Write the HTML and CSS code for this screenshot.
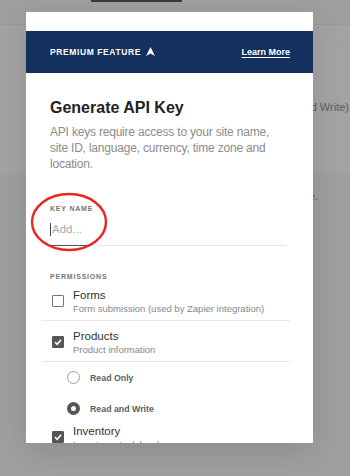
FILE: index.html
```html
<!DOCTYPE html>
<html>
<head>
    <title>Generate API Key</title>
    <meta name="viewport" content="width=device-width, initial-scale=1">
    <link rel="stylesheet" href="styles.css">
</head>
<body>
    <div class="page">
        <div class="page-tab"></div>
        <div class="page-panel">
            <p class="page-text">Read and Write)</p>
        </div>
        <p class="page-note">to your site.</p>
    </div>

    <div class="modal">
        <div class="modal-top"></div>
        <div class="banner">
            <span class="banner-label">
                PREMIUM FEATURE
                <svg class="banner-icon" width="9" height="9" viewBox="0 0 9 9">
                    <polygon points="4.5,0 9,9 4.5,6.6 0,9" fill="#fff"/>
                </svg>
            </span>
            <a class="banner-link" href="#">Learn More</a>
        </div>

        <div class="modal-body">
            <h1>Generate API Key</h1>
            <p class="intro">API keys require access to your site name, site ID, language, currency, time zone and location.</p>

            <div class="field">
                <label class="small-label">KEY NAME</label>
                <div class="field-input"><span class="caret"></span>Add...</div>
                <div class="field-line"></div>
                <svg class="highlight" width="78" height="60" viewBox="0 0 78 60">
                    <ellipse cx="39" cy="30" rx="37" ry="28" fill="none" stroke="#e8261c" stroke-width="2.4"/>
                </svg>
            </div>

            <div class="small-label perm-label">PERMISSIONS</div>

            <div class="perm-row">
                <span class="checkbox"></span>
                <div>
                    <div class="perm-title">Forms</div>
                    <div class="perm-sub">Form submission (used by Zapier integration)</div>
                </div>
            </div>

            <div class="perm-row">
                <span class="checkbox checked">
                    <svg width="10" height="10" viewBox="0 0 10 10"><polyline points="2,5.2 4.2,7.3 8,2.8" fill="none" stroke="#fff" stroke-width="1.6"/></svg>
                </span>
                <div>
                    <div class="perm-title">Products</div>
                    <div class="perm-sub">Product information</div>
                </div>
            </div>

            <div class="radio-row">
                <span class="radio"></span>
                <span class="radio-text">Read Only</span>
            </div>
            <div class="radio-row">
                <span class="radio selected"></span>
                <span class="radio-text">Read and Write</span>
            </div>

            <div class="perm-row last">
                <span class="checkbox checked">
                    <svg width="10" height="10" viewBox="0 0 10 10"><polyline points="2,5.2 4.2,7.3 8,2.8" fill="none" stroke="#fff" stroke-width="1.6"/></svg>
                </span>
                <div>
                    <div class="perm-title">Inventory</div>
                    <div class="perm-sub">Inventory stock levels</div>
                </div>
            </div>
        </div>
    </div>
</body>
</html>
```

FILE: styles.css
```css
* {
    margin: 0;
    padding: 0;
    box-sizing: border-box;
}

body {
    font-family: 'Liberation Sans', Arial, sans-serif;
    background: #9f9f9f;
    width: 350px;
    height: 476px;
    overflow: hidden;
}

/* page behind the overlay */
.page {
    height: 476px;
}

.page-tab {
    width: 91px;
    height: 2px;
    margin-left: 91px;
    background: #3a3a3a;
}

.page-panel {
    margin-top: 22px;
    height: 150px;
    border-top: 1px solid #999;
    background: #a3a3a3;
    padding: 76px 1px 0 0;
}

.page-text {
    font-size: 11px;
    color: #5e5e5e;
    text-align: right;
    white-space: nowrap;
}

.page-note {
    width: 318px;
    padding-top: 16px;
    font-size: 11px;
    color: #5e5e5e;
    text-align: right;
}

/* modal */
.modal {
    position: absolute;
    left: 26px;
    top: 12px;
    width: 287px;
    height: 431px;
    background: #fff;
    overflow: hidden;
    box-shadow: 0 8px 30px rgba(0,0,0,0.12);
}

.modal-top {
    height: 19px;
}

.banner {
    height: 42px;
    background: #14305f;
    display: flex;
    align-items: center;
    justify-content: space-between;
    padding: 0 23px 0 24px;
}

.banner-label {
    display: flex;
    align-items: center;
    gap: 5px;
    color: #fff;
    font-size: 8.5px;
    font-weight: bold;
    letter-spacing: 0.6px;
}

.banner-icon {
    margin-top: -1px;
}

.banner-link {
    color: #fff;
    font-size: 9px;
    font-weight: bold;
    text-decoration: underline;
    text-underline-offset: 2px;
}

.modal-body {
    padding: 26px 27px 0 24px;
}

h1 {
    font-size: 16px;
    font-weight: bold;
    color: #222;
    line-height: 18px;
}

.intro {
    margin-top: 7px;
    font-size: 12px;
    letter-spacing: -0.2px;
    line-height: 16px;
    color: #8c8c8c;
}

.field {
    position: relative;
    margin-top: 33px;
}

.small-label {
    display: block;
    font-size: 7px;
    font-weight: bold;
    letter-spacing: 0.8px;
    color: #777;
}

.field-input {
    display: flex;
    align-items: center;
    margin-top: 10px;
    height: 14px;
    font-size: 11.5px;
    color: #aaa;
}

.caret {
    width: 1px;
    height: 13px;
    background: #444;
    margin-right: 1px;
}

.field-line {
    margin-top: 9px;
    height: 1px;
    background: linear-gradient(to right, #555 40px, #e6e6e6 40px);
}

.highlight {
    position: absolute;
    left: -20px;
    top: -13px;
}

.perm-label {
    margin-top: 27px;
}

.perm-row {
    display: flex;
    align-items: flex-start;
    gap: 9px;
    margin-left: -8px;
    margin-right: -4px;
    padding: 8px 0 5px 10px;
    border-bottom: 1px solid #e8e8e8;
}

.perm-row.last {
    border-bottom: none;
    padding-top: 0;
}

.checkbox {
    flex: none;
    width: 12px;
    height: 12px;
    margin-top: 6.5px;
    border: 1.5px solid #777;
    border-radius: 1px;
    display: flex;
    align-items: center;
    justify-content: center;
}

.checkbox.checked {
    background: #555;
    border-color: #555;
}

.perm-title {
    font-size: 11.5px;
    color: #333;
    line-height: 14px;
}

.perm-sub {
    font-size: 9.5px;
    color: #888;
    line-height: 13px;
}

.radio-row {
    display: flex;
    align-items: center;
    gap: 10px;
    height: 31px;
    padding-left: 17px;
}

.radio {
    width: 13px;
    height: 13px;
    border: 1px solid #9a9a9a;
    border-radius: 50%;
}

.radio.selected {
    border: 4px solid #555;
}

.radio-text {
    font-size: 8.8px;
    font-weight: bold;
    color: #606060;
}
```
